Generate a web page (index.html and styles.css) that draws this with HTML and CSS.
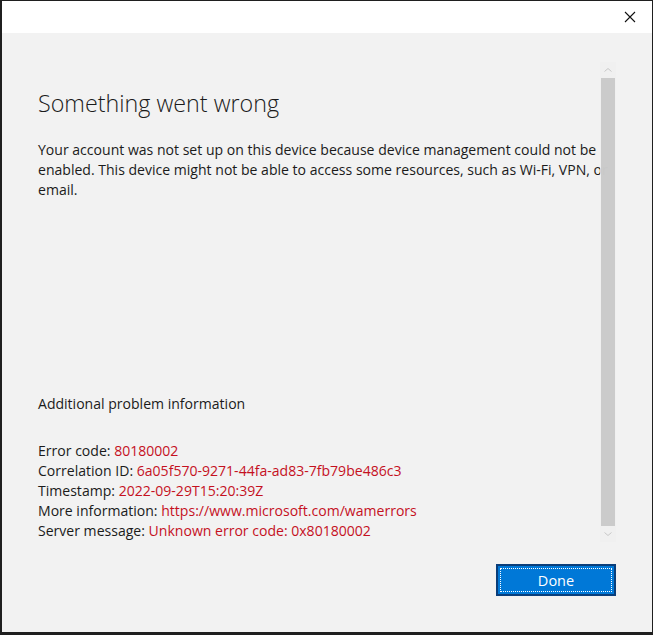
FILE: index.html
```html
<!DOCTYPE html>
<html>
<head>
<meta charset="utf-8">
<link rel="stylesheet" href="styles.css">
</head>
<body>
<div class="window">
  <div class="titlebar">
    <button class="close" aria-label="Close">
      <svg width="12" height="12" viewBox="0 0 12 12"><path d="M1 1 L11 11 M11 1 L1 11" stroke="#111" stroke-width="1.1" fill="none"/></svg>
    </button>
  </div>
  <div class="main">
    <div class="content">
      <h1 class="title">Something went wrong</h1>
      <p class="message">Your account was not set up on this device because device management could not be enabled. This device might not be able to access some resources, such as Wi-Fi, VPN, or email.</p>
      <p class="subhead">Additional problem information</p>
      <div class="details">
        <div>Error code: <span class="val">80180002</span></div>
        <div>Correlation ID: <span class="val">6a05f570-9271-44fa-ad83-7fb79be486c3</span></div>
        <div>Timestamp: <span class="val">2022-09-29T15:20:39Z</span></div>
        <div>More information: <span class="val">https://www.microsoft.com/wamerrors</span></div>
        <div>Server message: <span class="val">Unknown error code: 0x80180002</span></div>
      </div>
    </div>
    <div class="scrollbar">
      <svg class="arrow" width="16" height="12" viewBox="0 0 16 12"><path d="M4.5 7.5 L8 4.5 L11.5 7.5" stroke="#c8c8c8" stroke-width="1" fill="none"/></svg>
      <div class="thumb"></div>
      <svg class="arrow" width="16" height="12" viewBox="0 0 16 12"><path d="M4.5 4.5 L8 7.5 L11.5 4.5" stroke="#c8c8c8" stroke-width="1" fill="none"/></svg>
    </div>
  </div>
  <div class="footer">
    <button class="done"><span class="focus">Done</span></button>
  </div>
</div>
</body>
</html>
```
FILE: styles.css
```css
html, body {
  margin: 0;
  padding: 0;
  background: #1f1f1f;
}
body {
  width: 653px;
  height: 635px;
  overflow: hidden;
  font-family: "Segoe UI", "Open Sans", "Noto Sans", sans-serif;
}
.window {
  box-sizing: border-box;
  width: 653px;
  height: 635px;
  border-style: solid;
  border-color: #1f1f1f;
  border-width: 1px 1px 3px 2px;
  background: #f2f2f2;
  display: flex;
  flex-direction: column;
}
.titlebar {
  height: 32px;
  background: #ffffff;
  display: flex;
  justify-content: flex-end;
  align-items: center;
  flex-shrink: 0;
}
.close {
  border: 0;
  background: transparent;
  width: 46px;
  height: 32px;
  padding: 0;
  display: flex;
  align-items: center;
  justify-content: center;
  margin-right: -1px;
}
.main {
  position: relative;
  flex: 1;
  padding: 0 36px 0 36px;
}
.content {
  color: #1b1b1b;
  font-size: 14.05px;
  line-height: 20px;
}
.title {
  margin: 55px 0 0 0;
  font-size: 23.3px;
  font-weight: 300;
  line-height: 30px;
  color: #1b1b1b;
}
.message {
  margin: 22px 0 0 0;
  width: 574px;
}
.subhead {
  margin: 194px 0 0 0;
}
.details {
  margin-top: 27px;
}
.val {
  color: #c5111f;
}
.scrollbar {
  position: absolute;
  top: 29px;
  right: 36px;
  width: 16px;
  height: 480px;
  background: rgba(240, 240, 240, 0.85);
  display: flex;
  flex-direction: column;
  align-items: center;
}
.arrow {
  flex-shrink: 0;
  margin: 2px 0;
}
.thumb {
  flex: 1;
  width: 14px;
  background: rgba(198, 198, 198, 0.9);
}
.footer {
  height: 68px;
  flex-shrink: 0;
  display: flex;
  justify-content: flex-end;
  align-items: flex-start;
  padding-right: 36px;
}
.done {
  width: 120px;
  height: 32px;
  box-sizing: border-box;
  border: 2px solid #0a3e7a;
  background: #0078d7;
  padding: 2px;
  font-family: inherit;
  font-size: 14.5px;
  color: #ffffff;
  display: flex;
}
.focus {
  flex: 1;
  border: 1px dotted #ffffff;
  display: flex;
  align-items: center;
  justify-content: center;
}
```
